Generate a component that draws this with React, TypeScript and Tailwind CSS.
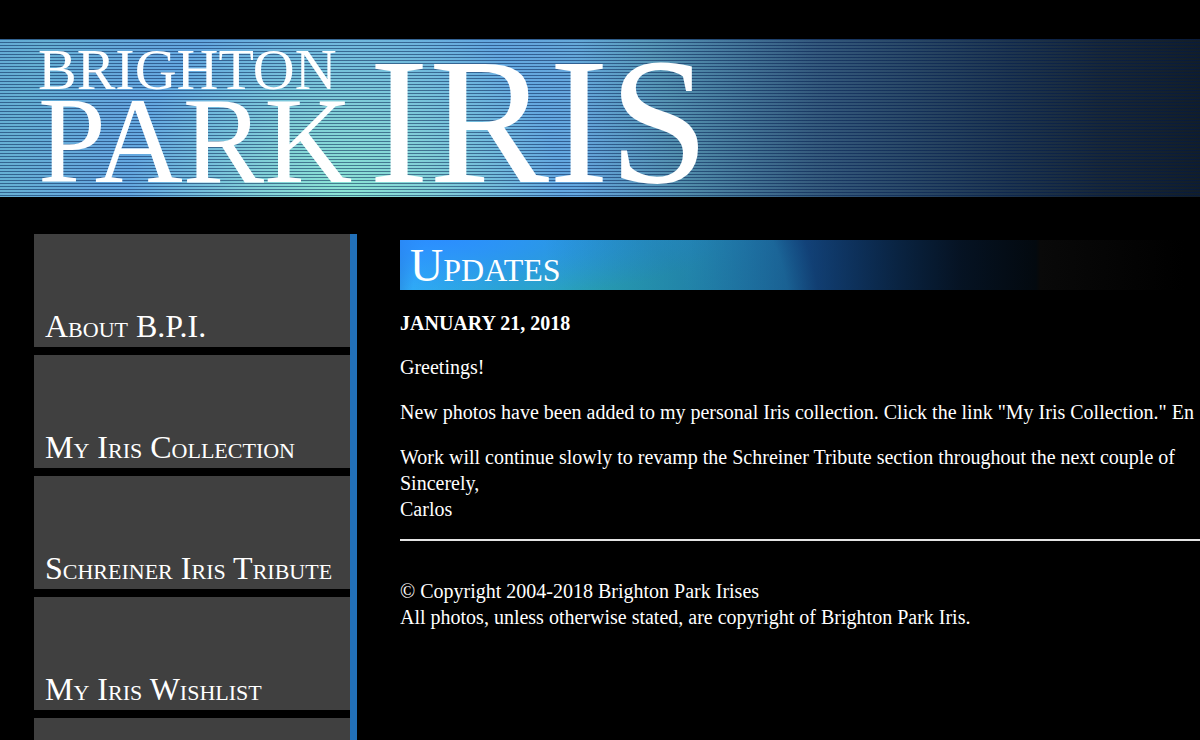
import type { ReactNode } from "react";

const navItems = ["About B.P.I.", "My Iris Collection", "Schreiner Iris Tribute", "My Iris Wishlist"];

function Logo() {
  return (
    <svg
      viewBox="0 0 710 158"
      className="block h-[158px] w-[710px] shrink-0 overflow-visible fill-white font-['Palatino_Linotype','Liberation_Serif',serif]"
      role="img"
      aria-label="Brighton Park Iris"
    >
      <text x="38" y="50" fontSize="58">BRIGHTON</text>
      <text x="38" y="143" fontSize="122">PARK</text>
      <text x="369" y="143" fontSize="180">IRIS</text>
    </svg>
  );
}

function NavTile({ children }: { children?: ReactNode }) {
  return (
    <li className="flex h-[113px] shrink-0 items-end bg-[#404040] px-[11px] pb-[5px]">
      {children}
    </li>
  );
}

export default function App() {
  return (
    <div className="flex h-screen flex-col overflow-hidden bg-black font-['Palatino_Linotype','Liberation_Serif',serif] text-white">
      <header className="mt-[39px] shrink-0 bg-[repeating-linear-gradient(180deg,rgba(0,25,75,0.5)_0px,rgba(0,25,75,0.5)_1px,transparent_1px,transparent_3px),linear-gradient(90deg,transparent_48%,rgba(10,20,30,0.32)_61%,rgba(12,22,34,0.5)_68%,rgba(12,24,40,0.78)_84%,rgba(14,22,32,0.88)_92%,rgba(14,22,30,0.94)_100%),radial-gradient(circle_at_345px_165px,#8ce6d4_0px,#82d0d8_90px,#64a8e0_215px,#65a7dd_250px,#66b0d4_340px,#5c9cd8_500px)]">
        <h1>
          <Logo />
        </h1>
      </header>

      <div className="mt-[37px] flex min-h-0 flex-1">
        <nav className="ml-[34px] w-[323px] shrink-0 overflow-hidden border-r-7 border-[#2270b8]">
          <ul className="flex flex-col gap-2">
            {navItems.map((item) => (
              <NavTile key={item}>
                <a href="#" className="text-[32px] leading-8 whitespace-nowrap [font-variant-caps:small-caps]">
                  {item}
                </a>
              </NavTile>
            ))}
            <NavTile />
          </ul>
        </nav>

        <main className="mt-1.5 ml-[43px] min-w-0 flex-1 overflow-hidden text-[20px] leading-[26px] whitespace-nowrap">
          <h2 className="h-[50px] bg-[linear-gradient(90deg,transparent_18%,rgba(8,30,70,0.25)_36%,rgba(8,35,70,0.6)_50%,rgba(6,24,44,0.85)_62%,rgba(4,14,26,0.94)_70%,#03090f_79.5%,#090909_80%,#000_98%),radial-gradient(ellipse_280px_60px_at_40px_0px,rgba(43,140,255,0.95)_0%,rgba(43,140,255,0)_100%),radial-gradient(circle_at_200px_80px,#2aa8b8_0px,#2aa6c8_90px,#30b0f4_190px,#2274cc_220px,#1e68c4_300px,#1a5aa8_420px)] pl-2.5 text-[46px] leading-[52px] [font-variant-caps:small-caps]">
            Updates
          </h2>
          <p className="mt-5 font-bold">JANUARY 21, 2018</p>
          <p className="mt-[18px]">Greetings!</p>
          <p className="mt-[19px]">
            New photos have been added to my personal Iris collection. Click the link "My Iris Collection." En
          </p>
          <p className="mt-[19px]">
            Work will continue slowly to revamp the Schreiner Tribute section throughout the next couple of
            <br />
            Sincerely,
            <br />
            Carlos
          </p>
          <hr className="mt-[17px] border-t-2 border-[#e4e4e4]" />
          <footer className="mt-[37px]">
            <p>© Copyright 2004-2018 Brighton Park Irises</p>
            <p>All photos, unless otherwise stated, are copyright of Brighton Park Iris.</p>
          </footer>
        </main>
      </div>
    </div>
  );
}
